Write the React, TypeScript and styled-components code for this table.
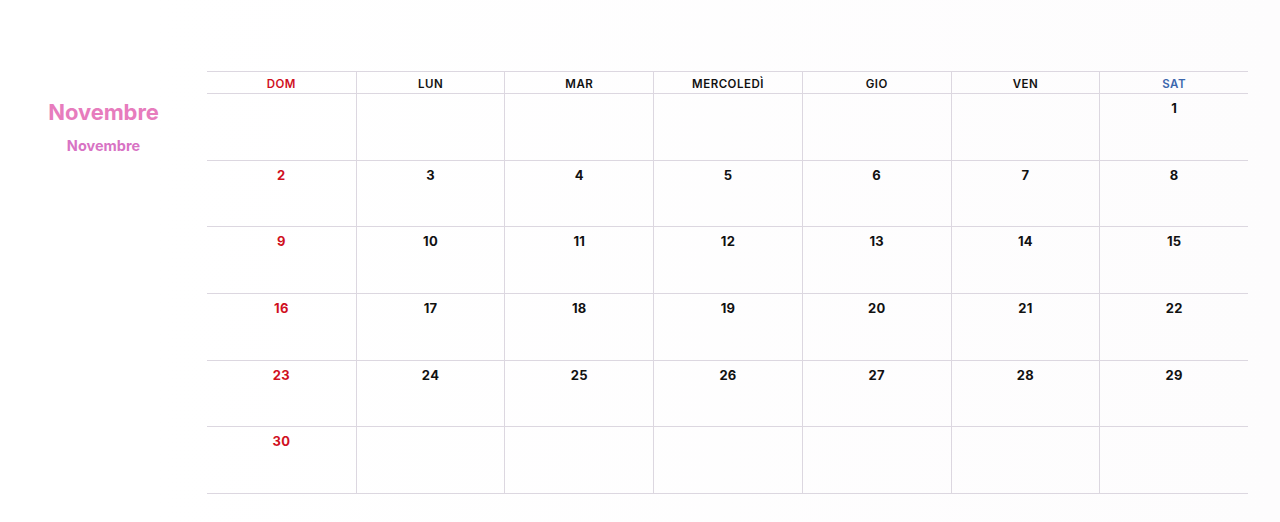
import React from 'react'
import styled, { createGlobalStyle } from 'styled-components'

const GlobalStyle = createGlobalStyle`
  html, body {
    margin: 0;
    padding: 0;
    background: #ffffff;
  }
  body {
    font-family: Inter, "Noto Sans", sans-serif;
  }
`

const LINE = '#dcd7e0'

const Page = styled.div`
  display: flex;
  width: 1280px;
  height: 522px;
  background: linear-gradient(90deg, #ffffff 0%, #ffffff 12%, #fdfcfd 100%);
`

const Sidebar = styled.aside`
  width: 207px;
  display: flex;
  flex-direction: column;
  align-items: center;
  padding-top: 98px;
  box-sizing: border-box;
`

const MonthTitle = styled.h1`
  margin: 0;
  font-size: 22px;
  font-weight: 700;
  color: #e77cbd;
  letter-spacing: -0.1px;
  line-height: 28px;
`

const MonthSub = styled.h2`
  margin: 11px 0 0;
  font-size: 14.5px;
  font-weight: 700;
  color: #d873c4;
  line-height: 18px;
`

const Calendar = styled.div`
  width: 1041px;
  margin-top: 71px;
  display: flex;
  flex-direction: column;
`

const HeaderRow = styled.div`
  display: grid;
  grid-template-columns: repeat(7, 1fr);
  height: 23px;
  border-top: 1px solid ${LINE};
  border-bottom: 1px solid ${LINE};
  box-sizing: border-box;
`

const HeadCell = styled.div<{ $tone: 'sun' | 'sat' | 'normal'; $first?: boolean }>`
  display: flex;
  align-items: center;
  justify-content: center;
  padding-top: 2px;
  border-left: ${(p) => (p.$first ? 'none' : `1px solid ${LINE}`)};
  font-size: 11.5px;
  font-weight: 600;
  letter-spacing: 0.5px;
  color: ${(p) => (p.$tone === 'sun' ? '#d0101e' : p.$tone === 'sat' ? '#3b67ad' : '#111111')};
`

const Body = styled.div`
  display: grid;
  grid-template-columns: repeat(7, 1fr);
  grid-template-rows: repeat(6, 1fr);
  height: 400px;
`

const DayCell = styled.div<{ $first?: boolean; $sun?: boolean }>`
  display: flex;
  justify-content: center;
  padding-top: 6px;
  box-sizing: border-box;
  border-left: ${(p) => (p.$first ? 'none' : `1px solid ${LINE}`)};
  border-bottom: 1px solid ${LINE};
  font-size: 13px;
  font-weight: 700;
  line-height: 16px;
  letter-spacing: 0.3px;
  color: ${(p) => (p.$sun ? '#d0101e' : '#111111')};
`

const days: { label: string; tone: 'sun' | 'sat' | 'normal' }[] = [
  { label: 'DOM', tone: 'sun' },
  { label: 'LUN', tone: 'normal' },
  { label: 'MAR', tone: 'normal' },
  { label: 'MERCOLEDÌ', tone: 'normal' },
  { label: 'GIO', tone: 'normal' },
  { label: 'VEN', tone: 'normal' },
  { label: 'SAT', tone: 'sat' },
]

// November starts on Saturday, 30 days
const cells: (number | null)[] = []
for (let i = 0; i < 6; i++) cells.push(null)
for (let d = 1; d <= 30; d++) cells.push(d)
while (cells.length < 42) cells.push(null)

export default function App() {
  return (
    <>
      <GlobalStyle />
      <Page>
        <Sidebar>
          <MonthTitle>Novembre</MonthTitle>
          <MonthSub>Novembre</MonthSub>
        </Sidebar>
        <Calendar>
          <HeaderRow>
            {days.map((d, i) => (
              <HeadCell key={d.label} $tone={d.tone} $first={i === 0}>
                {d.label}
              </HeadCell>
            ))}
          </HeaderRow>
          <Body>
            {cells.map((c, i) => (
              <DayCell key={i} $first={i % 7 === 0} $sun={i % 7 === 0}>
                {c ?? ''}
              </DayCell>
            ))}
          </Body>
        </Calendar>
      </Page>
    </>
  )
}
